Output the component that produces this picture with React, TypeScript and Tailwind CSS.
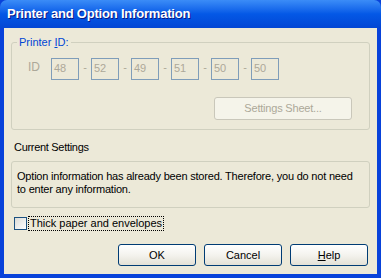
import React from 'react'

const ids = ['48', '52', '49', '51', '50', '50']

function XpButton({ children }: { children: React.ReactNode }) {
  return (
    <button className="w-[78px] h-[22px] rounded-[3px] border border-[#003c74] bg-gradient-to-b from-[#ffffff] via-[#f4f3ee] to-[#e3e1d6] text-[11px] text-black leading-none">
      {children}
    </button>
  )
}

export default function App() {
  return (
    <div
      className="w-[381px] h-[278px] flex flex-col bg-[#0842da] text-[11px] text-black"
      style={{ fontFamily: '"Liberation Sans", Arial, sans-serif' }}
    >
      {/* Title bar */}
      <div className="h-[28px] shrink-0 rounded-t-[7px] bg-gradient-to-b from-[#3b8cf7] via-[#0458e6] to-[#0346d4] flex items-center pl-[7px]">
        <span className="text-white font-bold text-[13px] [text-shadow:1px_1px_#0a1883] tracking-[-0.2px]">
          Printer and Option Information
        </span>
      </div>

      {/* Body */}
      <div className="flex-1 mx-[4px] mb-[4px] bg-[#ece9d8] px-[7px] flex flex-col">
        {/* Printer ID group */}
        <div className="relative mt-[14px] h-[88px] rounded-[3px] border border-[#d0d0bf] flex flex-col">
          <span className="absolute -top-[7px] left-[5px] px-[2px] bg-[#ece9d8] text-[#0046d5] leading-[13px]">
            Printer <span className="underline">I</span>D:
          </span>
          <div className="flex items-start pl-[16px] pt-[15px] text-[#aca899]">
            <span className="w-[23px] text-[12px] leading-[16px] pt-[1px]">ID</span>
            {ids.map((v, i) => (
              <div key={i} className="flex items-start">
                {i > 0 && <span className="w-[12px] text-center leading-[18px]">-</span>}
                <div className="w-[28px] h-[22px] border border-[#7f9db9] pl-[2px] pt-[3px] leading-[13px]">{v}</div>
              </div>
            ))}
          </div>
          <div className="flex justify-end pr-[17px] mt-[17px]">
            <div className="w-[138px] h-[23px] rounded-[3px] border border-[#c9c7ba] bg-[#f5f4ea] text-[#aca899] flex items-center justify-center tracking-[-0.2px]">
              Settings Sheet...
            </div>
          </div>
        </div>

        <div className="mt-[11px] pl-[3px] leading-[13px] tracking-[-0.3px]">Current Settings</div>

        <div className="mt-[7px] h-[47px] rounded-[3px] border border-[#d0d0bf] pl-[5px] pt-[8px] leading-[13px] tracking-[-0.2px]">
          <div>Option information has already been stored. Therefore, you do not need</div>
          <div>to enter any information.</div>
        </div>

        <div className="mt-[8px] flex items-center pl-[3px]">
          <div className="w-[13px] h-[13px] border border-[#1c5180] bg-gradient-to-br from-[#dcdcd7] to-[#ffffff]" />
          <span className="ml-[1px] px-[1px] border border-dotted border-black leading-[13px]">
            Thick paper and envelopes
          </span>
        </div>

        <div className="mt-[13px] flex justify-end gap-[8px] pr-[2px]">
          <XpButton>OK</XpButton>
          <XpButton>Cancel</XpButton>
          <XpButton>
            <span className="underline">H</span>elp
          </XpButton>
        </div>
      </div>
    </div>
  )
}
